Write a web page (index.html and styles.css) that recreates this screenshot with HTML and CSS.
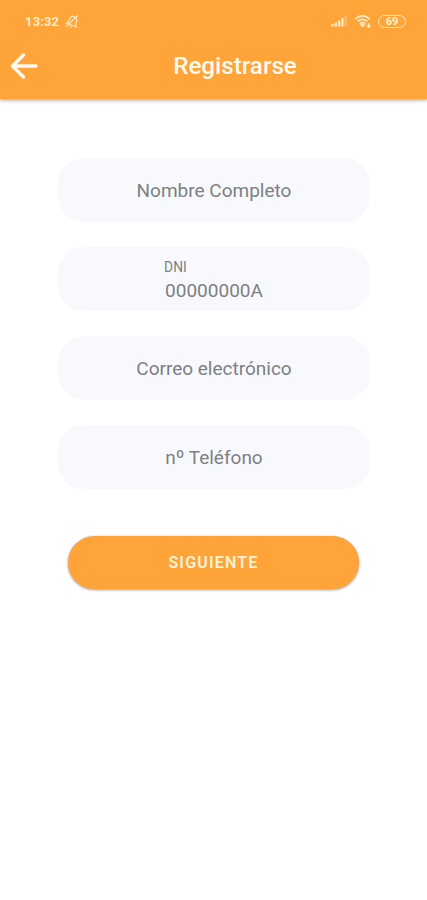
FILE: index.html
```html
<!DOCTYPE html>
<html lang="es">
<head>
  <meta charset="utf-8">
  <meta name="viewport" content="width=device-width, initial-scale=1">
  <title>Registrarse</title>
  <link rel="stylesheet" href="styles.css">
</head>
<body>
  <header class="header">
    <div class="status-bar">
      <span class="time">13:32</span>
      <svg class="bell" width="15" height="15" viewBox="0 0 15 15">
        <g transform="rotate(20 7.5 7.5)">
          <path d="M2.200 11.300h10.600l-1.500-2V6.500c0-2.300-1.600-4-3.800-4s-3.800 1.700-3.800 4v2.800zM6.300 13.200h2.400"/>
        </g>
        <path d="M1.200 12.500 12.800 1.500"/>
      </svg>
      <div class="status-icons">
        <svg width="17" height="12" viewBox="0 0 17 12">
          <path class="bars" d="M1.500 11.500V9M4.800 11.500V7.500M8.100 11.500v-6M11.400 11.500V3"/>
          <path class="bars faint" d="M14.700 11.500V1"/>
        </svg>
        <svg class="wifi" width="18" height="14" viewBox="0 0 18 14">
          <path d="M1.200 5q7.300-6.500 14.600 0M3.700 7.300q4.800-4 9.600 0M6 9.600q2.500-2 5 0"/>
          <path d="M7.300 11h2.400l-1.200 1.300zM14.700 9v4M13.200 11.700l1.500 1.500 1.500-1.500"/>
        </svg>
        <span class="battery">69</span>
      </div>
    </div>
    <div class="toolbar">
      <svg class="back" width="28" height="28" viewBox="0 0 28 28">
        <path d="M26 14H3M13.500 3 2.500 14l11 11"/>
      </svg>
      <h1>Registrarse</h1>
    </div>
  </header>

  <main class="form">
    <div class="field">Nombre Completo</div>
    <div class="field with-label">
      <div>
        <label>DNI</label>
        <span class="value">00000000A</span>
      </div>
    </div>
    <div class="field">Correo electrónico</div>
    <div class="field">nº Teléfono</div>
    <button class="next">SIGUIENTE</button>
  </main>
</body>
</html>
```
FILE: styles.css
```css
body {
  min-height: 100vh;
  margin: 0;
  font-family: Roboto, "Liberation Sans", sans-serif;
  background-color: #ffffff;
  color: #7e8083;
}

.header {
  height: 99px;
  background-color: #fea439;
  color: #fffaf0;
  box-shadow: 0 1px 4px rgba(0, 0, 0, 0.4);
}

.status-bar {
  display: flex;
  align-items: center;
  height: 42px;
  padding: 0 21px 0 25px;
  box-sizing: border-box;
  color: #fff0d0;
}

.time {
  font-size: 13px;
  font-weight: 600;
  letter-spacing: 0.2px;
}

.bell {
  margin-left: 6px;
}

.status-bar svg {
  fill: none;
  stroke: #ffe9c0;
  stroke-width: 1.2;
}

.status-icons {
  display: flex;
  align-items: center;
  gap: 6px;
  margin-left: auto;
}

.status-icons .bars {
  stroke-width: 2.3;
}

.status-icons .faint {
  opacity: 0.4;
}

.status-icons .wifi {
  stroke-width: 1.7;
}

.battery {
  width: 28px;
  height: 13px;
  box-sizing: border-box;
  border: 1.5px solid #ffe9c0;
  border-radius: 7px;
  font-size: 11px;
  font-weight: 700;
  line-height: 11px;
  text-align: center;
}

.toolbar {
  display: flex;
  align-items: center;
  height: 48px;
  padding-left: 10px;
}

.back {
  fill: none;
  stroke: #fffaf0;
  stroke-width: 3.4;
  stroke-linecap: round;
  stroke-linejoin: round;
}

h1 {
  flex: 1;
  margin: 0;
  padding-left: 5px;
  font-size: 24.2px;
  font-weight: 500;
  text-align: center;
}

.form {
  display: flex;
  flex-direction: column;
  align-items: center;
  gap: 25px;
  padding-top: 59px;
}

.field {
  display: flex;
  align-items: center;
  justify-content: center;
  width: 312px;
  height: 64px;
  padding: 1px 0 0 1px;
  box-sizing: border-box;
  border-radius: 26px;
  background-color: #f7f9fd;
  font-size: 19px;
}

.with-label {
  padding-top: 3px;
}

.with-label label {
  display: block;
  margin-left: -1px;
  font-size: 13.8px;
  line-height: 16px;
}

.value {
  display: block;
  margin-top: 5px;
  line-height: 22px;
}

.next {
  width: 291px;
  height: 53px;
  margin-top: 22px;
  border: none;
  border-radius: 27px;
  background-color: #fea439;
  box-shadow: 0 1px 3px rgba(0, 0, 0, 0.4);
  color: #fff3d6;
  font-family: inherit;
  font-size: 16px;
  font-weight: 600;
  letter-spacing: 1.2px;
}
```
